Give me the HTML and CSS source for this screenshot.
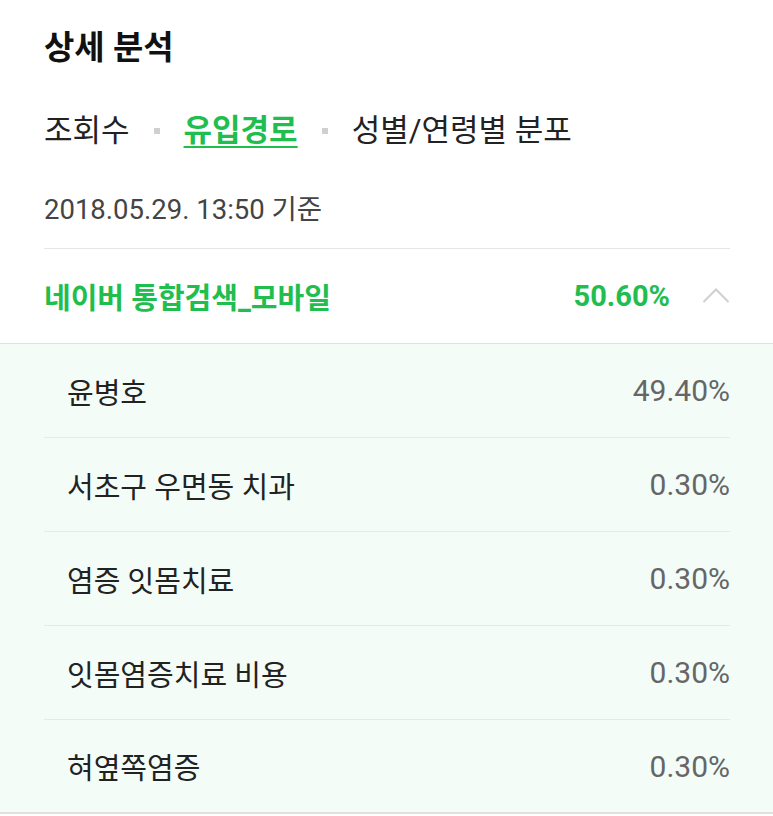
FILE: index.html
```html
<!DOCTYPE html>
<html lang="ko">
<head>
<meta charset="utf-8">
<link rel="stylesheet" href="styles.css">
</head>
<body>
<div class="top">
  <h1 class="title">상세 분석</h1>
  <nav class="tabs">
    <span class="tab">조회수</span>
    <span class="dot"></span>
    <span class="tab active">유입경로</span>
    <span class="dot"></span>
    <span class="tab">성별/연령별 분포</span>
  </nav>
  <div class="date">2018.05.29. 13:50 기준</div>
  <div class="group-head">
    <span class="group-name">네이버 통합검색_모바일</span>
    <span class="group-val">50.60%</span>
    <svg class="chev" width="28" height="16" viewBox="0 0 28 16"><polyline points="1.5,15 14,2.5 26.5,15" fill="none" stroke="#cfcfcf" stroke-width="2"/></svg>
  </div>
</div>
<ul class="list">
  <li class="row"><span class="name">윤병호</span><span class="val">49.40%</span></li>
  <li class="row"><span class="name">서초구 우면동 치과</span><span class="val">0.30%</span></li>
  <li class="row"><span class="name">염증 잇몸치료</span><span class="val">0.30%</span></li>
  <li class="row"><span class="name">잇몸염증치료 비용</span><span class="val">0.30%</span></li>
  <li class="row"><span class="name">혀옆쪽염증</span><span class="val">0.30%</span></li>
</ul>
</body>
</html>
```
FILE: styles.css
```css
* { box-sizing: border-box; }
html, body { margin: 0; padding: 0; background: #fff; }
body {
  font-family: Roboto, "Noto Sans CJK KR", sans-serif;
  color: #222;
}
.top { padding: 0 43px 0 44px; }
.title {
  margin: 0;
  padding-top: 27px;
  font-size: 33px;
  line-height: 42px;
  font-weight: 700;
  color: #111;
}
.tabs {
  margin-top: 42px;
  display: flex;
  align-items: center;
  gap: 24px;
  font-size: 31px;
  line-height: 40px;
  color: #222;
}
.tab.active {
  color: #1fbe4e;
  font-weight: 700;
  text-decoration: underline;
  text-decoration-thickness: 2px;
  text-underline-offset: 5px;
}
.dot { width: 6px; height: 6px; background: #d0d0d0; }
.date {
  margin-top: 42px;
  font-size: 27.5px;
  line-height: 34px;
  color: #444;
  padding-bottom: 21px;
  border-bottom: 1px solid #e6e6e6;
}
.group-head {
  height: 94px;
  display: flex;
  align-items: center;
  color: #1fbe4e;
  font-weight: 700;
  font-size: 29px;
}
.group-name { flex: 1; }
.group-val { margin-right: 32px; }
.chev { margin-top: -2px; }
.list {
  list-style: none;
  margin: 0;
  padding: 0 43px 0 44px;
  background: #f3fcf6;
  border-top: 1px solid #e0e0e0;
  border-bottom: 2px solid #e0e0e0;
}
.row {
  height: 94px;
  display: flex;
  align-items: center;
  justify-content: space-between;
  padding-left: 23px;
  font-size: 29px;
  border-bottom: 1px solid #e6ebe7;
}
.row:last-child { border-bottom: none; height: 92px; }
.name { color: #222; }
.val { color: #666; font-size: 30px; }
```
